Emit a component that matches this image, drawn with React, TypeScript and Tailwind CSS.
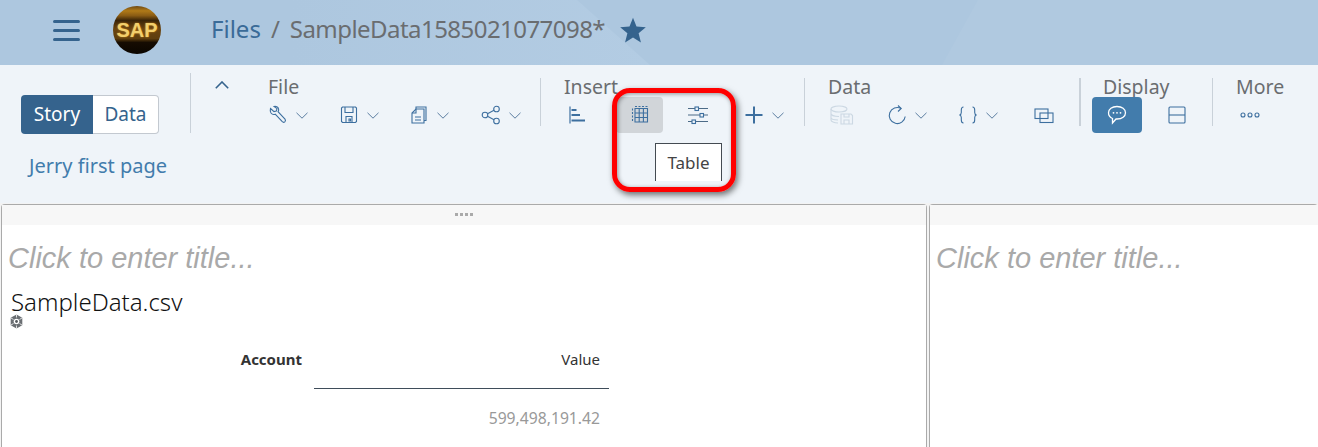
import React from "react";

const UI_FONT = "font-['Noto_Sans',sans-serif]";

const Chevron = ({ className = "" }: { className?: string }) => (
  <svg viewBox="0 0 12 7" className={`h-[7px] w-3 shrink-0 ${className}`} fill="none" stroke="#5b7da0" strokeWidth="1">
    <path d="M.5 .8L6 6.200 11.500 .8" />
  </svg>
);

const Icon = ({ children, size = 20 }: { children: React.ReactNode; size?: number }) => (
  <svg width={size} height={size} viewBox="0 0 20 20" fill="none" stroke="#3d6f9f" strokeWidth="1.1" className="shrink-0">
    {children}
  </svg>
);

const Wrench = () => (
  <Icon>
    <path d="M2.500 3.500L6 6.600l2.300-.6.7-2.400L6 1.500C7.800 .8 10.200 2 10.600 4c.2 1-.1 2-.6 2.700l7 7.500c.8 1 .4 2-.2 2.600-.7.6-1.700.7-2.500-.1L7.200 9.200C5.500 9.800 3.900 9.200 3 8 2.300 6.900 2.100 5 2.500 3.500z" />
  </Icon>
);
const Save = () => (
  <Icon>
    <path d="M3.500 2h13l1 1v13.500l-1 1h-13l-1-1V3z" />
    <path d="M6 2v5.500h8V2M7 17.500v-6h6v6M10 14h1.500v2H10z" />
  </Icon>
);
const Copies = () => (
  <Icon>
    <path d="M7 4V2h10v13.500h-2" />
    <path d="M7 4h8v14H3V8z" />
    <path d="M7 4v4H3M6 12h6M6 15h6" />
  </Icon>
);
const Share = () => (
  <Icon>
    <circle cx="4" cy="10" r="2.800" />
    <circle cx="15.500" cy="4" r="2.800" />
    <circle cx="15.500" cy="16" r="2.800" />
    <path d="M6.500 8.700l6.500-3.400M6.500 11.300l6.500 3.400" />
  </Icon>
);
const Bars = () => (
  <Icon>
    <path d="M3 1.500v17" strokeWidth="1.200" />
    <path d="M4.500 5h5M4.500 10h8.500M4.500 15.500h13.500" strokeWidth="2.200" />
  </Icon>
);
const TableGrid = () => (
  <Icon>
    <path d="M5 3.500h12.500v13.500H5zM5 8h12.500M5 12.500h12.500M9.200 3.500V17M13.400 3.500V17" />
    <path d="M5 1.500h12.500M2.500 3.500V17" strokeDasharray="2 1.500" />
  </Icon>
);
const Sliders = () => (
  <svg width={22} height={20} viewBox="0 0 22 20" fill="none" stroke="#3d6f9f" strokeWidth="1.100" className="shrink-0">
    <path d="M1 3.500h7M12 3.500h9M1 10h12M17 10h4M1 16.500h4M9 16.500h12" stroke="#4d6b87" />
    <rect x="8" y="2" width="3.500" height="3.500" />
    <rect x="13" y="8.500" width="3.500" height="3.500" />
    <rect x="5" y="15" width="3.500" height="3.500" />
  </svg>
);
const Plus = () => (
  <Icon>
    <path d="M10 1.500v17M1.500 10h17" strokeWidth="2" />
  </Icon>
);
const DbSave = () => (
  <svg width={24} height={20} viewBox="0 0 24 20" fill="none" stroke="#ccd8e3" strokeWidth="1.100" className="shrink-0">
    <ellipse cx="9" cy="4" rx="8" ry="3" />
    <path d="M1 4v11c0 1.500 3 3 7 3M1 8.500c0 1.500 3 3 8 3M1 12.500c0 1.500 3 2.500 7 2.500" />
    <path d="M11 9h10l1.500 1.500V19H11zM14 9v3h5V9M14 19v-4h5v4" />
  </svg>
);
const Refresh = () => (
  <Icon>
    <path d="M14 3.500a8 8 0 1 0 4.200 8" />
    <path d="M11 .5l3.200 3-3.200 3" />
  </Icon>
);
const Braces = () => (
  <Icon>
    <path d="M5.500 2C3.500 2 3.300 3 3.300 5v2.500c0 1.300-.5 2.200-1.800 2.500 1.300.3 1.800 1.200 1.800 2.500V15c0 2 .2 3 2.200 3" />
    <path d="M14.500 2c2 0 2.200 1 2.200 3v2.500c0 1.300.5 2.200 1.800 2.500-1.300.3-1.800 1.200-1.800 2.500V15c0 2-.2 3-2.200 3" />
  </Icon>
);
const Windows = () => (
  <Icon>
    <rect x="1" y="4" width="13" height="9.500" />
    <rect x="6" y="8" width="13" height="9.500" />
  </Icon>
);
const Comment = () => (
  <svg width={20} height={20} viewBox="0 0 20 20" fill="none" stroke="#ffffff" strokeWidth="1.300" className="shrink-0">
    <path d="M10 1.500c5 0 8.500 2.700 8.500 6.300S15 14 10 14H9l-3.500 4v-4.500C3 12.500 1.500 10.500 1.500 7.800 1.500 4.200 5 1.500 10 1.500z" />
    <circle cx="6.500" cy="7.800" r=".9" fill="#ffffff" stroke="none" />
    <circle cx="10" cy="7.800" r=".9" fill="#ffffff" stroke="none" />
    <circle cx="13.500" cy="7.800" r=".9" fill="#ffffff" stroke="none" />
  </svg>
);
const Split = () => (
  <Icon>
    <rect x="2" y="2" width="16" height="16" rx="1" />
    <path d="M2 10h16" />
  </Icon>
);
const Dots = () => (
  <svg width={20} height={6} viewBox="0 0 20 6" fill="none" stroke="#3d6f9f" strokeWidth="1.100" className="shrink-0">
    <circle cx="3" cy="3" r="2" />
    <circle cx="10" cy="3" r="2" />
    <circle cx="17" cy="3" r="2" />
  </svg>
);
const Hexagon = () => (
  <svg width={13} height={15} viewBox="0 0 13 15">
    <path d="M6.500 .5l5.800 3.300v7.400l-5.800 3.300L.7 11.200V3.800z" fill="#6b6f73" />
    <circle cx="6.500" cy="7.500" r="2.800" fill="#ffffff" />
    <circle cx="6.500" cy="7.500" r="1.400" fill="#55595d" />
    <path d="M6.500 .5v3M.7 3.800l2.800 1.700M12.300 3.800L9.500 5.500M.7 11.200l2.800-1.700M12.300 11.200L9.500 9.500M6.500 14.500v-3" stroke="#ffffff" strokeWidth=".8" />
  </svg>
);

const Sap = () => (
  <div className="flex h-12 w-12 shrink-0 items-center justify-center rounded-full bg-[linear-gradient(#6e4a14_0%,#b07a18_10%,#8a5c14_20%,#3a2408_30%,#6a4410_48%,#5e3e0e_68%,#160c02_76%,#0a0500_100%)]">
    <span className="font-['Liberation_Sans',sans-serif] text-[20px] leading-none font-bold text-[#f2cf6c] [text-shadow:0_0_2px_#c98a1e]">SAP</span>
  </div>
);

const Tool = ({ w, children, chevron }: { w: string; children: React.ReactNode; chevron?: boolean }) => (
  <div className={`flex h-9 shrink-0 items-center ${w}`}>
    {children}
    {chevron && <Chevron className="ml-2" />}
  </div>
);

const Divider = ({ w = "w-px" }: { w?: string }) => <div className={`mt-[13px] h-12 shrink-0 bg-[#c9d1d9] ${w}`} />;

const Group = ({ label, w, children }: { label: string; w: string; children: React.ReactNode }) => (
  <div className={`shrink-0 pt-[10px] pl-[23px] ${w}`}>
    <div className="h-[22px] text-[19.500px] leading-[24px] text-[#6a6d70]">{label}</div>
    <div className="flex items-center">{children}</div>
  </div>
);

const Panel = ({ w, children }: { w: string; children?: React.ReactNode }) => (
  <section className={`h-[243px] shrink-0 rounded-t-[4px] border-t border-l border-[#aaaaaa] bg-white ${w}`}>
    <div className="flex h-5 items-center justify-center gap-[2px] bg-[#f7f7f7] pb-[2px]">
      {children && [0, 1, 2, 3].map((i) => <span key={i} className="h-[3px] w-[3px] bg-[#aaaaaa]" />)}
    </div>
    <h2 className="mt-[18px] pl-[6px] font-['Liberation_Sans',sans-serif] text-[29px] leading-[30px] text-[#a9a9a9] italic">
      Click to enter title...
    </h2>
    {children}
  </section>
);

export default function App() {
  return (
    <div className={`h-[447px] w-[1318px] overflow-hidden bg-white ${UI_FONT}`}>
      {/* shell bar */}
      <header className="relative flex h-[65px] items-center overflow-hidden bg-[#adc7df] pb-[5px] pl-[53px]">
        <div className="absolute inset-y-0 left-[292px] w-[358px] bg-[linear-gradient(90deg,#adc7df,#b3cce3)] [clip-path:polygon(0_0,285px_0,100%_100%,0_100%)]" />
        <div className="absolute inset-y-0 right-0 left-[942px] bg-[#b0c9e0] [clip-path:polygon(36px_0,100%_0,100%_100%,0_100%)]" />
        <div className="relative flex items-center">
          <div className="flex w-[27px] flex-col gap-[6px]">
            <span className="h-[3px] rounded-full bg-[#35638d]" />
            <span className="h-[3px] rounded-full bg-[#35638d]" />
            <span className="h-[3px] rounded-full bg-[#35638d]" />
          </div>
          <div className="ml-[33px]">
            <Sap />
          </div>
          <div className="ml-[50px] -translate-y-px text-[24px] leading-none text-[#3a6b98]">Files</div>
          <div className="ml-[10px] -translate-y-px text-[24px] leading-none text-[#6a6d70]">/</div>
          <div className="ml-[10px] -translate-y-px text-[24px] leading-none tracking-[-0.55px] text-[#6a6d70]">SampleData1585021077098*</div>
          <svg width={28} height={28} viewBox="0 0 24 24" className="ml-[14px]" fill="#35638d">
            <path d="M12 1.500l3 7.600 8 .6-6.200 5.100 2 8-6.800-4.400-6.800 4.400 2-8L1 9.700l8-.6z" />
          </svg>
        </div>
      </header>

      {/* toolbar */}
      <div className="relative flex h-[138px] bg-[#eff4f9]">
        <div className="w-[190px] shrink-0 pt-[30px] pl-[21px]">
          <div className="flex h-[39px] w-[138px] text-[19px]">
            <div className="flex w-[72px] items-center justify-center rounded-l-[4px] bg-[#35638d] text-white">Story</div>
            <div className="flex flex-1 items-center justify-center rounded-r-[4px] border border-l-0 border-[#c3c9d0] bg-white text-[#35638d]">Data</div>
          </div>
          <div className="mt-5 pl-2 text-[20px] leading-6 text-[#427cac]">Jerry first page</div>
        </div>
        <div className="mt-2 h-[60px] w-px shrink-0 bg-[#c9d1d9]" />
        <div className="w-[54px] shrink-0 pt-4 pl-6">
          <svg width={14} height={8} viewBox="0 0 14 8" fill="none" stroke="#35638d" strokeWidth="1.600">
            <path d="M.8 7.200L7 1l6.200 6.200" />
          </svg>
        </div>
        <div className="flex shrink-0">
          <Group label="File" w="w-[295px]">
            <Tool w="w-[71px]" chevron><Wrench /></Tool>
            <Tool w="w-[70px]" chevron><Save /></Tool>
            <Tool w="w-[72px]" chevron><Copies /></Tool>
            <Tool w="w-[60px]" chevron><Share /></Tool>
          </Group>
          <Divider />
          <Group label="Insert" w="w-[263px]">
            <Tool w="w-[52px] pl-[3px]"><Bars /></Tool>
            <div className="flex h-9 w-[47px] shrink-0 items-center justify-center rounded-[4px] bg-[#d1d5d9]"><TableGrid /></div>
            <Tool w="w-[81px] pl-[24px]"><Sliders /></Tool>
            <Tool w="w-[50px]" chevron><Plus /></Tool>
          </Group>
          <Divider />
          <Group label="Data" w="w-[274px]">
            <Tool w="w-[59px] pl-[2px]"><DbSave /></Tool>
            <Tool w="w-[71px]" chevron><Refresh /></Tool>
            <Tool w="w-[76px]" chevron><Braces /></Tool>
            <Tool w="w-[30px]"><Windows /></Tool>
          </Group>
          <Divider w="w-[2px]" />
          <div className="w-[131px] shrink-0 pt-[10px] pl-[11px]">
            <div className="h-[22px] pl-[11px] text-[19.500px] leading-[24px] text-[#6a6d70]">Display</div>
            <div className="flex items-center">
              <div className="flex h-9 w-[50px] shrink-0 items-center justify-center rounded-[4px] bg-[#427cac]"><Comment /></div>
              <div className="flex h-9 w-[70px] shrink-0 items-center justify-center"><Split /></div>
            </div>
          </div>
          <Divider />
          <Group label="More" w="w-[105px]">
            <Tool w="w-[30px] pl-1"><Dots /></Tool>
          </Group>
        </div>

        {/* tooltip with the red callout drawn over it */}
        <div className="absolute top-[78px] left-[655px] flex h-[38px] w-[67px] items-start justify-center border-x border-t border-[#444b52] bg-white pt-[7px] text-[17px] leading-[24px] text-[#444]">
          Table
        </div>
        <div className="absolute top-[23px] left-[612px] h-[104px] w-[124px] rounded-[18px] border-[5px] border-[#ff0000] shadow-[2px_3px_6px_rgba(0,0,0,0.55),inset_1px_1px_4px_rgba(0,0,0,0.4)]" />
      </div>

      {/* story canvas */}
      <main className="flex gap-[2px] bg-[#f3f3f3] pt-px pl-px">
        <Panel w="w-[926px] border-r">
          <div className="mt-[15px] pl-[9px]">
            <div className="text-[24px] leading-[28px] font-light text-[#111111]">SampleData.csv</div>
            <div className="mt-[-2px] -ml-px"><Hexagon /></div>
          </div>
          <div className="mt-[18px] grid w-[608px] grid-cols-[312px_295px] text-[15px]">
            <div className="pt-[2px] pr-[12px] text-right leading-5 font-bold text-[#333333]">Account</div>
            <div className="h-[42px] border-b border-[#3f4d5a] pt-[2px] pr-[9px] text-right leading-5 text-[#333333]">Value</div>
            <div />
            <div className="pt-[19px] pr-[9px] text-right text-[15.7px] leading-5 text-[#999999]">599,498,191.42</div>
          </div>
        </Panel>
        <Panel w="w-[389px]" />
      </main>
    </div>
  );
}
